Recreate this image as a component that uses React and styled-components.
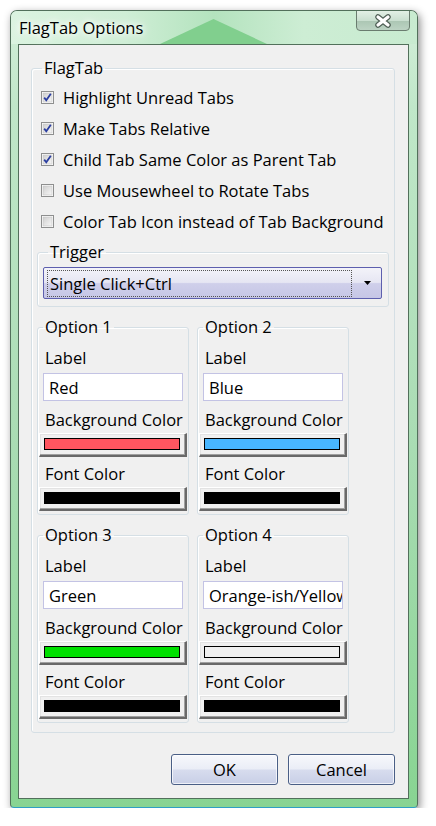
import React from "react";
import styled, { createGlobalStyle } from "styled-components";

const GlobalStyle = createGlobalStyle`
    body {
        margin: 0;
        background: #ffffff;
        font-family: "Open Sans", "Noto Sans", sans-serif;
        font-size: 16.5px;
        color: #000;
    }
`;

const Window = styled.div`
    box-sizing: border-box;
    width: 408px;
    height: 798px;
    margin: 10px 0 0 10px;
    border: 1px solid #52705b;
    border-bottom-color: #2f9fc4;
    border-radius: 7px 7px 4px 4px;
    background: linear-gradient(to bottom, #d4efda 0%, #c0e7c9 12%, #a9dcb3 55%, #88d492 100%);
    box-shadow: 2px 3px 9px rgba(0, 0, 0, 0.45);
    display: flex;
    flex-direction: column;
    overflow: hidden;
`;

const TitleBar = styled.div`
    position: relative;
    height: 33px;
    display: flex;
    align-items: flex-start;
    padding-left: 8px;
    background: linear-gradient(to right, #dbf3e0 0%, #cfeed6 28%, #b4e3be 50%, #cdedd4 72%, #c8ebd0 100%);

    &::before {
        content: "";
        position: absolute;
        left: 149px;
        top: 8px;
        width: 107px;
        height: 25px;
        background: #81cf8e;
        clip-path: polygon(50% 0, 100% 100%, 0 100%);
    }
`;

const Title = styled.span`
    position: relative;
    margin-top: 6px;
    line-height: 22px;
    text-shadow: 0 0 6px #fff, 0 0 10px #fff, 0 0 14px #fff;
`;

const CloseButton = styled.div`
    box-sizing: border-box;
    position: relative;
    margin: -1px 7px 0 auto;
    width: 54px;
    height: 21px;
    border: 1px solid #6a7c6f;
    border-radius: 0 0 4px 4px;
    background: linear-gradient(to bottom, #e2f0e5 0%, #cadfd0 50%, #abc6b3 51%, #bcd3c3 100%);
    display: flex;
    align-items: center;
    justify-content: center;
`;

const Client = styled.div`
    box-sizing: border-box;
    flex: 1;
    margin: 0 8px 8px 7px;
    border: 1px solid #52705b;
    background: #f0f0f0;
    display: flex;
    flex-direction: column;
    padding: 12px 13px 13px 12px;
`;

const Group = styled.fieldset`
    margin: ${(p) => p.$margin || "0"};
    padding: ${(p) => p.$pad || "0"};
    min-width: 0;
    border: 1px solid #d5dfe5;
    border-radius: 3px;
    box-shadow: inset 1px 1px 0 #fff;
`;

const Legend = styled.legend`
    padding: 0 2px;
    margin-left: 5px;
    line-height: 22px;
`;

const CheckRow = styled.label`
    display: flex;
    align-items: center;
    gap: 9px;
    height: 31px;
    padding-left: 4px;
    white-space: nowrap;
`;

const Select = styled.div`
    box-sizing: border-box;
    height: 32px;
    border: 1px solid #5d5fae;
    border-radius: 2px;
    background: linear-gradient(to bottom, #f3f3f9 0%, #e6e6f3 48%, #cfcfea 52%, #c6c6e6 100%);
    display: flex;
    align-items: center;
    padding: 1px 9px 1px 3px;
`;

const SelectText = styled.div`
    flex: 1;
    height: 27px;
    box-sizing: border-box;
    border: 1px dotted #555;
    display: flex;
    align-items: center;
    padding-left: 2px;
    margin-right: 12px;
`;

const OptionGrid = styled.div`
    display: grid;
    grid-template-columns: 152px 152px;
    column-gap: 8px;
    row-gap: 9px;
    margin-top: 9px;
`;

const FieldLabel = styled.div`
    line-height: 22px;
    padding-left: 7px;
    margin-top: ${(p) => p.$top || "0"};
    white-space: nowrap;
`;

const TextBox = styled.div`
    box-sizing: border-box;
    height: 28px;
    margin: 4px 5px 0 5px;
    border: 1px solid #c3c3e4;
    background: #fff;
    padding-left: 5px;
    display: flex;
    align-items: center;
    overflow: hidden;
    white-space: nowrap;
`;

const ColorButton = styled.div`
    box-sizing: border-box;
    height: 24px;
    margin: 2px 1px 0 1px;
    padding: 4px 5px 5px 4px;
    background: #f0f0f0;
    border-top: 1px solid #fff;
    border-left: 1px solid #fff;
    border-right: 2px solid #696969;
    border-bottom: 2px solid #696969;
    box-shadow: inset -1px -1px 0 #a0a0a0, inset 1px 1px 0 #e3e3e3;
`;

const Swatch = styled.div`
    box-sizing: border-box;
    height: 100%;
    border: 1px solid #000;
    background: ${(p) => p.$color};
`;

const ButtonRow = styled.div`
    display: flex;
    justify-content: flex-end;
    gap: 10px;
    margin-top: auto;
`;

const DialogButton = styled.div`
    box-sizing: border-box;
    width: 107px;
    height: 31px;
    border: 1px solid #4a5f86;
    border-radius: 3px;
    background: linear-gradient(to bottom, #f7f8fc 0%, #eaedf6 48%, #d7dcee 52%, #c8cfe6 100%);
    box-shadow: inset 0 0 0 1px rgba(255, 255, 255, 0.7);
    display: flex;
    align-items: center;
    justify-content: center;
`;

const CloseGlyph = () => (
    <svg width="20" height="14" viewBox="0 0 20 14">
        <path d="M5 3 L15 11 M15 3 L5 11" stroke="#4f5f55" strokeWidth="5.5" strokeLinecap="round" />
        <path d="M5 3 L15 11 M15 3 L5 11" stroke="#fff" strokeWidth="3.2" strokeLinecap="round" />
    </svg>
);

const CheckBox = ({ checked }) => (
    <svg width="13" height="13" viewBox="0 0 13 13">
        <defs>
            <linearGradient id="cbfill" x1="0" y1="0" x2="1" y2="1">
                <stop offset="0" stopColor="#cfcfcf" />
                <stop offset="1" stopColor="#f7f7f7" />
            </linearGradient>
        </defs>
        <rect x="0.5" y="0.5" width="12" height="12" fill="#fff" stroke="#8e8f8f" />
        <rect x="2" y="2" width="9" height="9" fill="url(#cbfill)" stroke="#c4c4c4" strokeWidth="0.6" />
        {checked && (
            <path d="M3.2 6.6 L5.3 9.3 L9.8 2.8" fill="none" stroke="#2b3ea0" strokeWidth="1.8" />
        )}
    </svg>
);

const DropArrow = () => (
    <svg width="8" height="5" viewBox="0 0 8 5">
        <path d="M0 0 H7 L3.5 4 Z" fill="#000" />
    </svg>
);

const checks = [
    { text: "Highlight Unread Tabs", on: true },
    { text: "Make Tabs Relative", on: true },
    { text: "Child Tab Same Color as Parent Tab", on: true },
    { text: "Use Mousewheel to Rotate Tabs", on: false },
    { text: "Color Tab Icon instead of Tab Background", on: false },
];

const options = [
    { name: "Option 1", label: "Red", bg: "#ff5660" },
    { name: "Option 2", label: "Blue", bg: "#48b6ff" },
    { name: "Option 3", label: "Green", bg: "#00e000" },
    { name: "Option 4", label: "Orange-ish/Yellow", bg: "#f0f0f0" },
];

export default function App() {
    return (
        <React.Fragment>
            <GlobalStyle />
            <Window>
                <TitleBar>
                    <Title>FlagTab Options</Title>
                    <CloseButton>
                        <CloseGlyph />
                    </CloseButton>
                </TitleBar>
                <Client>
                    <Group $pad="3px 5px 9px 5px">
                        <Legend>FlagTab</Legend>
                        {checks.map((c) => (
                            <CheckRow key={c.text}>
                                <CheckBox checked={c.on} />
                                {c.text}
                            </CheckRow>
                        ))}
                        <Group $margin="4px 0 0 0" $pad="4px 6px 7px 5px">
                            <Legend>Trigger</Legend>
                            <Select>
                                <SelectText>Single Click+Ctrl</SelectText>
                                <DropArrow />
                            </Select>
                        </Group>
                        <OptionGrid>
                            {options.map((o) => (
                                <Group key={o.name} $pad="9px 0 3px 0">
                                    <Legend>{o.name}</Legend>
                                    <FieldLabel>Label</FieldLabel>
                                    <TextBox>{o.label}</TextBox>
                                    <FieldLabel $top="8px">Background Color</FieldLabel>
                                    <ColorButton>
                                        <Swatch $color={o.bg} />
                                    </ColorButton>
                                    <FieldLabel $top="6px">Font Color</FieldLabel>
                                    <ColorButton>
                                        <Swatch $color="#000" />
                                    </ColorButton>
                                </Group>
                            ))}
                        </OptionGrid>
                    </Group>
                    <ButtonRow>
                        <DialogButton>OK</DialogButton>
                        <DialogButton>Cancel</DialogButton>
                    </ButtonRow>
                </Client>
            </Window>
        </React.Fragment>
    );
}
